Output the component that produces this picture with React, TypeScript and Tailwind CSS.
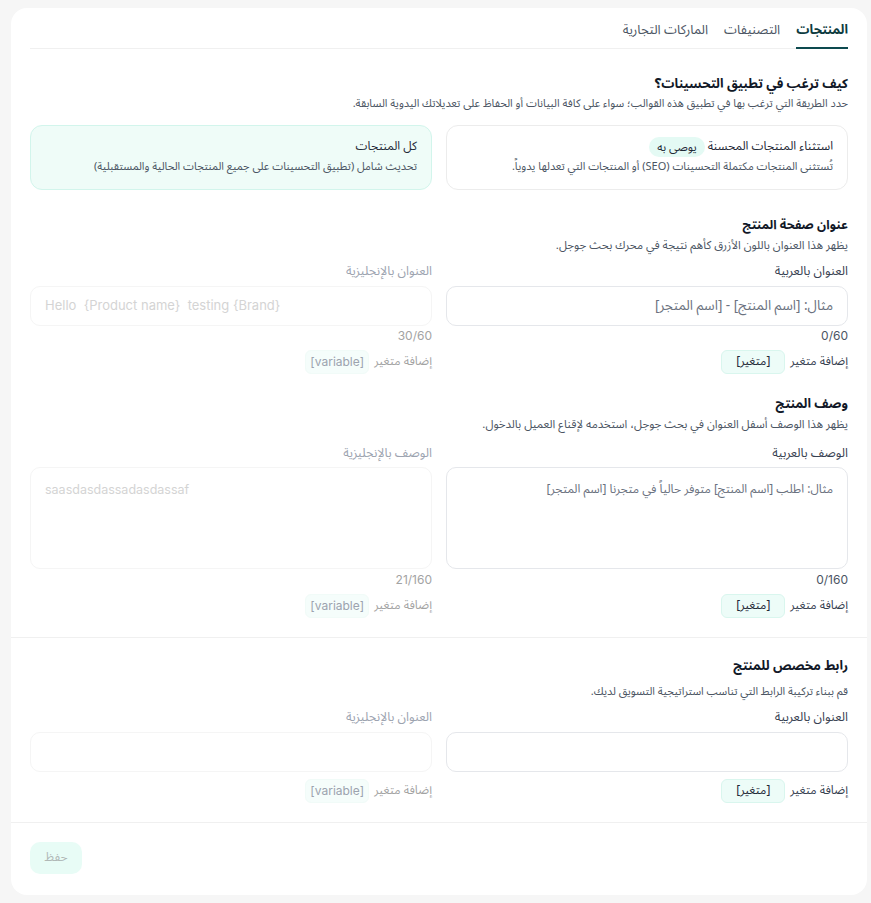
import React from "react";

const AR = { fontFamily: '"Noto Sans Arabic", "Noto Kufi Arabic", "DejaVu Sans", sans-serif' };
const EN = { fontFamily: 'Inter, "Noto Sans", "DejaVu Sans", sans-serif' };

function Tabs() {
  return (
    <div className="mx-[19px] flex gap-4 border-b border-[#f0f0f0] pt-3">
      <div className="-mb-px border-b-2 border-[#0d4a4f] pb-[7px] text-[13px] leading-[20px] font-bold text-[#0d3b40]">
        المنتجات
      </div>
      <div className="-mb-px pb-[7px] text-[13px] leading-[20px] text-[#4b5563]">التصنيفات</div>
      <div className="-mb-px pb-[7px] text-[13px] leading-[20px] text-[#4b5563]">الماركات التجارية</div>
    </div>
  );
}

function OptionCard({
  title,
  desc,
  badge,
  active,
}: {
  title: string;
  desc: string;
  badge?: string;
  active?: boolean;
}) {
  return (
    <div
      className={
        active
          ? "rounded-xl border border-[#d2f5ec] bg-[#effcf8] px-[14px] pt-[11px] pb-[12px]"
          : "rounded-xl border border-[#ececec] bg-white px-[14px] pt-[11px] pb-[12px]"
      }
    >
      <div className="flex items-center gap-[3px] text-[12px] leading-[20px] text-[#1f2937]">
        <span>{title}</span>
        {badge && (
          <span className="rounded-full bg-[#e4faf4] px-[8px] text-[11.5px] leading-[20px] text-[#1f2937]">{badge}</span>
        )}
      </div>
      <div className="text-[11px] leading-[20px] text-[#4b5563]">{desc}</div>
    </div>
  );
}

function Chip({ label, text, muted }: { label: string; text: string; muted?: boolean }) {
  return (
    <div className="flex items-center gap-[5px]">
      <span className={muted ? "text-[12px] text-[#a3a3a3]" : "text-[12px] text-[#374151]"}>{label}</span>
      <span
        className={
          muted
            ? "flex h-6 w-16 items-center justify-center rounded-md border border-[#f1fbf8] bg-[#f5fdfb] text-[12px] text-[#9ca3af]"
            : "flex h-6 w-16 items-center justify-center rounded-md border border-[#d9f6ee] bg-[#edfcf8] text-[12px] text-[#1f2937]"
        }
        style={muted ? EN : undefined}
      >
        {text}
      </span>
    </div>
  );
}

function SectionHead({
  title,
  desc,
  size,
  titleSize,
}: {
  title: string;
  desc: string;
  size?: string;
  titleSize?: string;
}) {
  return (
    <div>
      <div className={(titleSize ?? "text-[13px]") + " leading-[20px] font-bold text-[#111827]"}>{title}</div>
      <div className={(size ?? "text-[11.5px]") + " leading-[20px] text-[#4b5563]"}>{desc}</div>
    </div>
  );
}

export default function App() {
  return (
    <div dir="rtl" className="min-h-[903px] bg-[#f6f6f6] pt-2 pr-1 pl-[11px] pb-[9px]" style={AR}>
      <div className="rounded-2xl bg-white">
        <Tabs />

        {/* apply mode */}
        <div className="px-[19px] pt-[25px]">
          <SectionHead
            size="text-[11px]"
            title="كيف ترغب في تطبيق التحسينات؟"
            desc="حدد الطريقة التي ترغب بها في تطبيق هذه القوالب؛ سواء على كافة البيانات أو الحفاظ على تعديلاتك اليدوية السابقة."
          />
          <div className="mt-[11px] grid grid-cols-2 gap-[14px]">
            <OptionCard
              title="استثناء المنتجات المحسنة"
              badge="يوصى به"
              desc="تُستثنى المنتجات مكتملة التحسينات (SEO) أو المنتجات التي تعدلها يدوياً."
            />
            <OptionCard
              active
              title="كل المنتجات"
              desc="تحديث شامل (تطبيق التحسينات على جميع المنتجات الحالية والمستقبلية)"
            />
          </div>
        </div>

        {/* product page title */}
        <div className="px-[19px] pt-[25px]">
          <SectionHead
            titleSize="text-[12.5px]"
            title="عنوان صفحة المنتج"
            desc="يظهر هذا العنوان باللون الأزرق كأهم نتيجة في محرك بحث جوجل."
          />
          <div className="mt-[6px] grid grid-cols-2 gap-[14px]">
            <div>
              <div className="text-[12.5px] leading-[20px] text-[#374151]">العنوان بالعربية</div>
              <div className="mt-[5px] flex h-10 items-center rounded-[10px] border border-[#e5e7eb] px-[14px] text-[13.5px] text-[#6b7280]">
                مثال: [اسم المنتج] - [اسم المتجر]
              </div>
              <div className="mt-[2px] text-[12px] leading-[16px] text-[#4b5563]" style={EN}>0/60</div>
              <div className="mt-[6px]">
                <Chip label="إضافة متغير" text="[متغير]" />
              </div>
            </div>
            <div>
              <div className="text-[12.5px] leading-[20px] text-[#9ca3af]">العنوان بالإنجليزية</div>
              <div
                dir="ltr"
                className="mt-[5px] flex h-10 items-center rounded-[10px] border border-[#f5f5f5] px-[14px] text-[13px] text-[#d4d4d4]"
                style={EN}
              >
                Hello&nbsp; {"{Product name}"}&nbsp; testing {"{Brand}"}
              </div>
              <div className="mt-[2px] text-[12px] leading-[16px] text-[#a3a3a3]" style={EN}>30/60</div>
              <div className="mt-[6px]">
                <Chip muted label="إضافة متغير" text="[variable]" />
              </div>
            </div>
          </div>
        </div>

        {/* product description */}
        <div className="px-[19px] pt-[20px] pb-[19px]">
          <SectionHead title="وصف المنتج" desc="يظهر هذا الوصف أسفل العنوان في بحث جوجل، استخدمه لإقناع العميل بالدخول." />
          <div className="mt-[9px] grid grid-cols-2 gap-[14px]">
            <div>
              <div className="text-[12.5px] leading-[20px] text-[#374151]">الوصف بالعربية</div>
              <div className="mt-[4px] h-[102px] rounded-[10px] border border-[#e5e7eb] px-[14px] pt-[13px] text-[12px] text-[#6b7280]">
                مثال: اطلب [اسم المنتج] متوفر حالياً في متجرنا [اسم المتجر]
              </div>
              <div className="mt-[3px] text-[12px] leading-[16px] text-[#4b5563]" style={EN}>0/160</div>
              <div className="mt-[6px]">
                <Chip label="إضافة متغير" text="[متغير]" />
              </div>
            </div>
            <div>
              <div className="text-[12.5px] leading-[20px] text-[#9ca3af]">الوصف بالإنجليزية</div>
              <div
                dir="ltr"
                className="mt-[4px] h-[102px] rounded-[10px] border border-[#f5f5f5] px-[14px] pt-[13px] text-[12.5px] text-[#d4d4d4]"
                style={EN}
              >
                saasdasdassadasdassaf
              </div>
              <div className="mt-[3px] text-[12px] leading-[16px] text-[#a3a3a3]" style={EN}>21/160</div>
              <div className="mt-[6px]">
                <Chip muted label="إضافة متغير" text="[variable]" />
              </div>
            </div>
          </div>
        </div>

        {/* custom product link */}
        <div className="border-t border-[#f0f0f0] px-[19px] pt-[18px] pb-[19px]">
          <div className="text-[13px] leading-[20px] font-bold text-[#111827]">رابط مخصص للمنتج</div>
          <div className="mt-[6px] text-[11px] leading-[20px] text-[#4b5563]">قم ببناء تركيبة الرابط التي تناسب استراتيجية التسويق لديك.</div>
          <div className="mt-[5px] grid grid-cols-2 gap-[14px]">
            <div>
              <div className="text-[12.5px] leading-[20px] text-[#374151]">العنوان بالعربية</div>
              <div className="mt-[5px] h-10 rounded-[10px] border border-[#e5e7eb]"></div>
              <div className="mt-[7px]">
                <Chip label="إضافة متغير" text="[متغير]" />
              </div>
            </div>
            <div>
              <div className="text-[12.5px] leading-[20px] text-[#9ca3af]">العنوان بالإنجليزية</div>
              <div className="mt-[5px] h-10 rounded-[10px] border border-[#f5f5f5]"></div>
              <div className="mt-[7px]">
                <Chip muted label="إضافة متغير" text="[variable]" />
              </div>
            </div>
          </div>
        </div>

        {/* footer */}
        <div className="flex justify-end border-t border-[#f0f0f0] px-[19px] pt-[19px] pb-[21px]">
          <button className="h-8 w-[52px] rounded-[10px] bg-[#e8fcf6] text-[12px] text-[#b0b8b6]">حفظ</button>
        </div>
      </div>
    </div>
  );
}
